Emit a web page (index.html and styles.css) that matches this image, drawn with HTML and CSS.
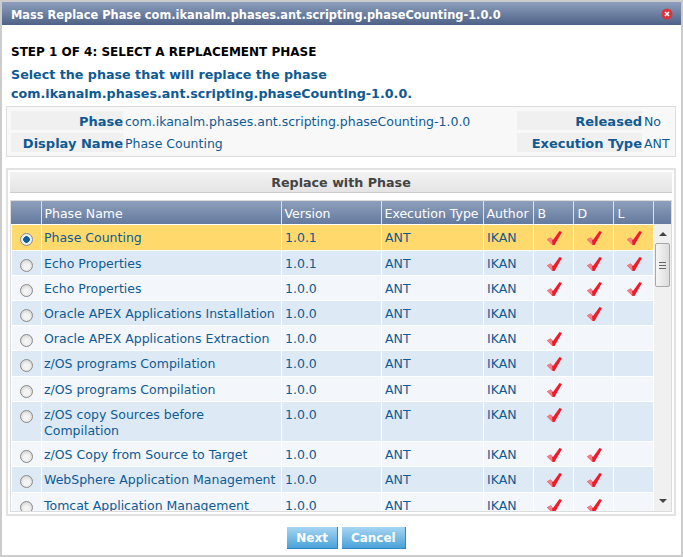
FILE: index.html

```html
<!DOCTYPE html>
<html lang="en">
<head>
  <meta charset="UTF-8">
  <title>Mass Replace Phase</title>
  <link rel="stylesheet" href="styles.css">
</head>
<body>
  <svg class="defs" width="0" height="0">
    <symbol id="tick" viewBox="0 0 16 16">
      <path d="M1 9.5 L4.5 7.5 L7 10 L13.5 1 L16 2 L8.5 15 L6.5 15 Z" fill="#ee1c2b"/>
      <path d="M1 9.5 L4.5 7.5 L6 9 L6.5 15 Z" fill="#f0808a"/>
    </symbol>
  </svg>
  <div class="dialog">
    <div class="titlebar">
      <span class="title-text">Mass Replace Phase com.ikanalm.phases.ant.scripting.phaseCounting-1.0.0</span>
      <svg class="close" width="12" height="12" viewBox="0 0 12 12">
        <circle cx="6" cy="6" r="5.5" fill="#d9343c"/>
        <path d="M4 4 L8 8 M8 4 L4 8" stroke="#fff" stroke-width="1.6"/>
      </svg>
    </div>
    <div class="content">
      <h2 class="step">STEP 1 OF 4: SELECT A REPLACEMENT PHASE</h2>
      <p class="intro">Select the phase that will replace the phase<br>com.ikanalm.phases.ant.scripting.phaseCounting-1.0.0.</p>

      <div class="info">
        <div class="label">Phase</div>
        <div class="value">com.ikanalm.phases.ant.scripting.phaseCounting-1.0.0</div>
        <div class="label">Released</div>
        <div class="value">No</div>
        <div class="label">Display Name</div>
        <div class="value">Phase Counting</div>
        <div class="label">Execution Type</div>
        <div class="value">ANT</div>
      </div>

      <div class="panel">
        <div class="panel-title">Replace with Phase</div>
        <div class="grid">
          <div class="grid-head">
            <table>
              <colgroup><col class="c-radio"><col class="c-name"><col class="c-ver"><col class="c-type"><col class="c-auth"><col class="c-flag"><col class="c-flag"><col class="c-flag"></colgroup>
              <tr><th></th><th>Phase Name</th><th>Version</th><th>Execution Type</th><th>Author</th><th>B</th><th>D</th><th>L</th></tr>
            </table>
            <div class="head-end"></div>
          </div>
          <div class="grid-main">
            <div class="rows">
              <table>
                <colgroup><col class="c-radio"><col class="c-name"><col class="c-ver"><col class="c-type"><col class="c-auth"><col class="c-flag"><col class="c-flag"><col class="c-flag"></colgroup>
                <tr class="selected"><td class="pick"><span class="radio on"></span></td><td>Phase Counting</td><td>1.0.1</td><td>ANT</td><td>IKAN</td><td class="flag"><svg class="tick"><use href="#tick"/></svg></td><td class="flag"><svg class="tick"><use href="#tick"/></svg></td><td class="flag"><svg class="tick"><use href="#tick"/></svg></td></tr>
                <tr class="odd"><td class="pick"><span class="radio"></span></td><td>Echo Properties</td><td>1.0.1</td><td>ANT</td><td>IKAN</td><td class="flag"><svg class="tick"><use href="#tick"/></svg></td><td class="flag"><svg class="tick"><use href="#tick"/></svg></td><td class="flag"><svg class="tick"><use href="#tick"/></svg></td></tr>
                <tr><td class="pick"><span class="radio"></span></td><td>Echo Properties</td><td>1.0.0</td><td>ANT</td><td>IKAN</td><td class="flag"><svg class="tick"><use href="#tick"/></svg></td><td class="flag"><svg class="tick"><use href="#tick"/></svg></td><td class="flag"><svg class="tick"><use href="#tick"/></svg></td></tr>
                <tr class="odd"><td class="pick"><span class="radio"></span></td><td>Oracle APEX Applications Installation</td><td>1.0.0</td><td>ANT</td><td>IKAN</td><td class="flag"></td><td class="flag"><svg class="tick"><use href="#tick"/></svg></td><td class="flag"></td></tr>
                <tr><td class="pick"><span class="radio"></span></td><td>Oracle APEX Applications Extraction</td><td>1.0.0</td><td>ANT</td><td>IKAN</td><td class="flag"><svg class="tick"><use href="#tick"/></svg></td><td class="flag"></td><td class="flag"></td></tr>
                <tr class="odd tall"><td class="pick"><span class="radio"></span></td><td>z/OS programs Compilation</td><td>1.0.0</td><td>ANT</td><td>IKAN</td><td class="flag"><svg class="tick"><use href="#tick"/></svg></td><td class="flag"></td><td class="flag"></td></tr>
                <tr><td class="pick"><span class="radio"></span></td><td>z/OS programs Compilation</td><td>1.0.0</td><td>ANT</td><td>IKAN</td><td class="flag"><svg class="tick"><use href="#tick"/></svg></td><td class="flag"></td><td class="flag"></td></tr>
                <tr class="odd wrap"><td class="pick"><span class="radio"></span></td><td>z/OS copy Sources before Compilation</td><td>1.0.0</td><td>ANT</td><td>IKAN</td><td class="flag"><svg class="tick"><use href="#tick"/></svg></td><td class="flag"></td><td class="flag"></td></tr>
                <tr><td class="pick"><span class="radio"></span></td><td>z/OS Copy from Source to Target</td><td>1.0.0</td><td>ANT</td><td>IKAN</td><td class="flag"><svg class="tick"><use href="#tick"/></svg></td><td class="flag"><svg class="tick"><use href="#tick"/></svg></td><td class="flag"></td></tr>
                <tr class="odd tall"><td class="pick"><span class="radio"></span></td><td>WebSphere Application Management</td><td>1.0.0</td><td>ANT</td><td>IKAN</td><td class="flag"><svg class="tick"><use href="#tick"/></svg></td><td class="flag"><svg class="tick"><use href="#tick"/></svg></td><td class="flag"></td></tr>
                <tr><td class="pick"><span class="radio"></span></td><td>Tomcat Application Management</td><td>1.0.0</td><td>ANT</td><td>IKAN</td><td class="flag"><svg class="tick"><use href="#tick"/></svg></td><td class="flag"><svg class="tick"><use href="#tick"/></svg></td><td class="flag"></td></tr>
              </table>
            </div>
            <div class="scrollbar">
              <span class="arrow up"></span>
              <div class="track"><div class="thumb"><i></i><i></i><i></i></div></div>
              <span class="arrow down"></span>
            </div>
          </div>
        </div>
      </div>

      <div class="actions">
        <button class="btn">Next</button>
        <button class="btn">Cancel</button>
      </div>
    </div>
  </div>
</body>
</html>
```

FILE: styles.css

```css
html, body {
  margin: 0;
  height: 100%;
  overflow: hidden;
}
body {
  background: #fff;
  color: #0f5a92;
  font-family: "DejaVu Sans", Verdana, sans-serif;
  font-size: 12.5px;
}
.defs {
  display: block;
  height: 0;
}
.dialog {
  box-sizing: border-box;
  width: 683px;
  height: 557px;
  border: 2px solid #ccc;
}
.titlebar {
  display: flex;
  align-items: center;
  justify-content: space-between;
  height: 23px;
  padding: 0 8px 0 9px;
  box-sizing: border-box;
  background: linear-gradient(#8d9fbc, #4e6287);
  color: #fff;
  font-weight: bold;
  font-size: 11.4px;
}
.title-text {
  padding-top: 3px;
}
.content {
  padding: 0 4px;
}
.step {
  margin: 19px 0 0 5px;
  color: #000;
  font-size: 12px;
  line-height: 16px;
}
.intro {
  margin: 5px 0 0 5px;
  color: #0f5a92;
  font-size: 12.7px;
  font-weight: bold;
  line-height: 19px;
}
.info {
  display: grid;
  grid-template-columns: 112px 390px 125px 1fr;
  grid-auto-rows: 19px;
  row-gap: 3px;
  column-gap: 2px;
  margin: 3px 1px 0 0;
  padding: 4px;
  border: 1px solid #ddd;
  background: #f8f8f8;
  align-items: start;
}
.label {
  height: 19px;
  line-height: 21px;
  text-align: right;
  background: #f0f0f0;
  font-weight: bold;
  font-size: 13px;
}
.value {
  line-height: 21px;
  white-space: nowrap;
}
.panel {
  box-sizing: border-box;
  height: 348px;
  margin: 11px 1px 0 0;
  padding: 2px;
  border: 2px solid #e2e2e2;
}
.panel-title {
  height: 20px;
  line-height: 22px;
  text-align: center;
  font-weight: bold;
  font-size: 12.7px;
  color: #444;
  background: linear-gradient(#f3f3f3, #e4e4e4);
  border-bottom: 1px solid #ccc;
}
.grid {
  margin-top: 7px;
  border: 1px solid #dcdcdc;
}
.grid-head {
  display: flex;
  height: 23px;
  background: linear-gradient(#8d9fbc, #647a9e);
}
.head-end {
  flex: 1;
  border-left: 1px solid #dfe4ec;
}
table {
  border-collapse: collapse;
  table-layout: fixed;
  width: 642px;
  flex: none;
}
.c-radio { width: 30px; }
.c-name { width: 240px; }
.c-ver { width: 100px; }
.c-type { width: 102px; }
.c-auth { width: 50px; }
.c-flag { width: 40px; }
th {
  box-sizing: border-box;
  height: 23px;
  padding: 2px 3px 0;
  text-align: left;
  color: #fff;
  font-weight: normal;
  border-left: 1px solid #dfe4ec;
  white-space: nowrap;
}
th:first-child {
  border-left: 0;
}
th:nth-child(n+6) {
  padding-left: 4px;
}
.grid-main {
  display: flex;
  height: 287px;
}
.rows {
  width: 642px;
  margin-top: 1px;
  overflow: hidden;
  flex: none;
}
td {
  height: 25px;
  padding: 5px 3px 0;
  border: 1px solid #fff;
  border-width: 0 1px 1px 1px;
  background: #f3f6fb;
  vertical-align: top;
  line-height: 16px;
  box-sizing: border-box;
}
td:nth-child(2) {
  padding-left: 2px;
}
tr.tall td {
  height: 26px;
}
tr.wrap td {
  height: 40px;
}
tr.odd td {
  background: #ddeaf6;
}
tr.selected td {
  background: #ffd96b;
}
td.pick {
  padding: 8px 0 0;
}
td.flag {
  padding: 5px 0 0;
}
.radio {
  display: block;
  box-sizing: border-box;
  width: 13px;
  height: 13px;
  margin: 0 auto;
  border: 1px solid #8a8a8a;
  border-radius: 50%;
  background: radial-gradient(circle at 50% 60%, #f4f4f4 30%, #c8c8c8);
}
.radio.on {
  background: radial-gradient(circle, #0d5f9a 0 3px, #eee 3.6px);
}
.tick {
  display: block;
  width: 16px;
  height: 16px;
  margin: 0 auto;
}
.scrollbar {
  display: flex;
  flex: 1;
  flex-direction: column;
  align-items: center;
  margin-left: 1px;
  background: #f0f0f0;
}
.arrow {
  flex: none;
  width: 0;
  height: 0;
  margin: 8px 0 7px;
  border: 4px solid transparent;
  border-top: 0;
  border-bottom: 4px solid #444;
}
.arrow.down {
  margin: 5px 0 8px;
  border: 4px solid transparent;
  border-bottom: 0;
  border-top: 4px solid #444;
}
.track {
  flex: 1;
  align-self: stretch;
}
.thumb {
  box-sizing: border-box;
  display: flex;
  flex-direction: column;
  justify-content: center;
  align-items: center;
  gap: 2px;
  height: 44px;
  margin: 0 1px;
  border: 1px solid #a8a8a8;
  border-radius: 2px;
  background: linear-gradient(90deg, #f6f6f6, #dcdcdc);
}
.thumb i {
  width: 7px;
  height: 1px;
  background: #666;
}
.actions {
  display: flex;
  justify-content: center;
  gap: 4px;
  margin-top: 11px;
  padding-left: 10px;
}
.btn {
  box-sizing: border-box;
  height: 22px;
  padding: 0 9px;
  border: 0;
  border-bottom: 1px solid #2f86c4;
  border-right: 1px solid #2f86c4;
  background: linear-gradient(#a6d6f2, #4aa2da);
  color: #fff;
  font-family: inherit;
  font-size: 12px;
  font-weight: bold;
}
```
